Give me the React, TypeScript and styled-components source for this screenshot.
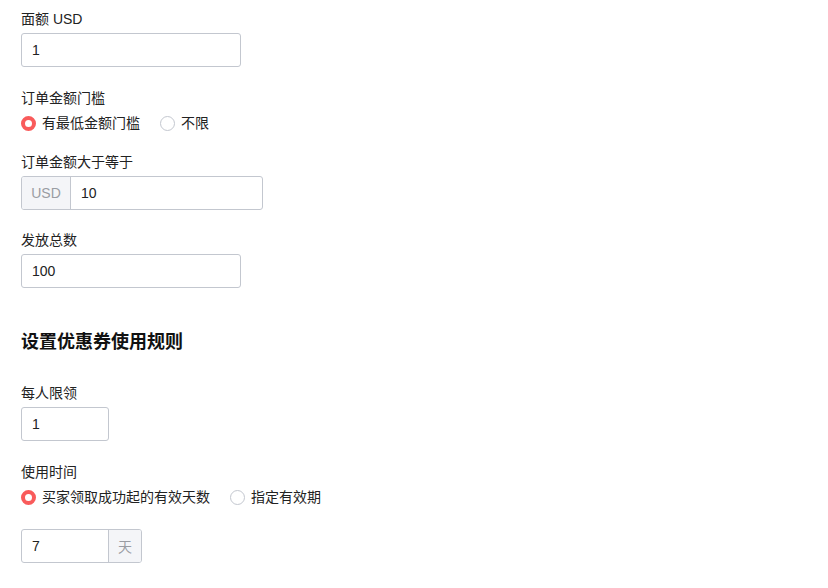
import styled, { createGlobalStyle } from 'styled-components'

const GlobalStyle = createGlobalStyle`
  body {
    margin: 0;
    background: #fff;
    font-family: "Liberation Sans", "Noto Sans CJK SC", sans-serif;
    font-size: 14px;
    color: #222;
  }
`

const Page = styled.div`
  padding: 10px 21px;
`

const FormItem = styled.div<{ $gap?: number }>`
  display: flex;
  flex-direction: column;
  align-items: flex-start;
  margin-bottom: ${(p) => p.$gap ?? 21}px;
`

const Label = styled.div`
  line-height: 18px;
  margin-bottom: 5px;
`

const Input = styled.div<{ $width: number }>`
  box-sizing: border-box;
  width: ${(p) => p.$width}px;
  height: 34px;
  padding: 0 10px;
  display: flex;
  align-items: center;
  border: 1px solid #c3c7cf;
  border-radius: 3px;
  background: #fff;
`

const Group = styled.div`
  display: flex;
  height: 34px;
  border: 1px solid #c3c7cf;
  border-radius: 3px;
  box-sizing: border-box;
  overflow: hidden;
`

const GroupInput = styled.div<{ $width: number }>`
  box-sizing: border-box;
  width: ${(p) => p.$width}px;
  padding: 0 10px;
  display: flex;
  align-items: center;
`

const Addon = styled.div<{ $side: 'left' | 'right'; $width: number }>`
  box-sizing: border-box;
  width: ${(p) => p.$width}px;
  display: flex;
  align-items: center;
  justify-content: center;
  background: #f4f5f8;
  color: #9a9da3;
  ${(p) => (p.$side === 'left' ? 'border-right' : 'border-left')}: 1px solid #c3c7cf;
`

const RadioRow = styled.div`
  display: flex;
  align-items: center;
  gap: 20px;
  line-height: 20px;
  margin-top: 1px;
`

const RadioOption = styled.label`
  display: flex;
  align-items: center;
  gap: 6px;
`

const RadioCircle = styled.span<{ $checked?: boolean }>`
  box-sizing: border-box;
  width: 15px;
  height: 15px;
  border-radius: 50%;
  background: #fff;
  border: ${(p) => (p.$checked ? '4px solid #f95b5b' : '1px solid #c3c7cf')};
`

const Heading = styled.h3`
  margin: 42px 0 30px;
  font-size: 18px;
  line-height: 24px;
  font-weight: bold;
  color: #111;
`

const Radio = ({ checked, children }: { checked?: boolean; children: string }) => (
  <RadioOption>
    <RadioCircle $checked={checked} />
    {children}
  </RadioOption>
)

export default function App() {
  return (
    <>
      <GlobalStyle />
      <Page>
        <FormItem $gap={22}>
          <Label>面额 USD</Label>
          <Input $width={220}>1</Input>
        </FormItem>
        <FormItem $gap={20}>
          <Label>订单金额门槛</Label>
          <RadioRow>
            <Radio checked>有最低金额门槛</Radio>
            <Radio>不限</Radio>
          </RadioRow>
        </FormItem>
        <FormItem>
          <Label>订单金额大于等于</Label>
          <Group>
            <Addon $side="left" $width={49}>USD</Addon>
            <GroupInput $width={191}>10</GroupInput>
          </Group>
        </FormItem>
        <FormItem $gap={0}>
          <Label>发放总数</Label>
          <Input $width={220}>100</Input>
        </FormItem>

        <Heading>设置优惠券使用规则</Heading>

        <FormItem $gap={22}>
          <Label>每人限领</Label>
          <Input $width={88}>1</Input>
        </FormItem>
        <FormItem $gap={22}>
          <Label>使用时间</Label>
          <RadioRow>
            <Radio checked>买家领取成功起的有效天数</Radio>
            <Radio>指定有效期</Radio>
          </RadioRow>
        </FormItem>
        <FormItem>
          <Group>
            <GroupInput $width={86}>7</GroupInput>
            <Addon $side="right" $width={33}>天</Addon>
          </Group>
        </FormItem>
      </Page>
    </>
  )
}
